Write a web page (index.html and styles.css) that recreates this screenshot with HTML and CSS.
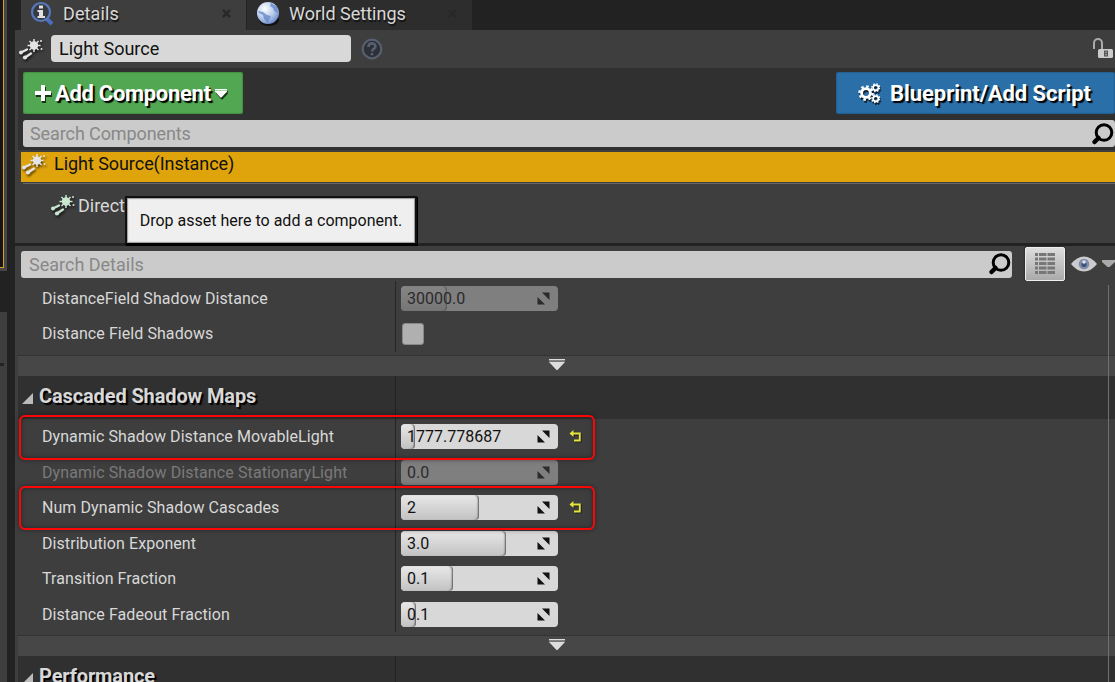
FILE: index.html
```html
<!DOCTYPE html>
<html lang="en">
<head>
    <meta charset="UTF-8">
    <meta name="viewport" content="width=device-width, initial-scale=1.0">
    <title>Details</title>
    <link rel="stylesheet" href="styles.css">
</head>
<body>
    <svg class="sprite" width="0" height="0">
        <symbol id="light" viewBox="0 0 26 24">
            <path d="M16 2v13M9.500 8.500h13M11.500 4l9 9M20.500 4l-9 9" stroke="currentColor" stroke-width="1.500"/>
            <path d="M3 15.500l6-3M7 20.500l6-4" stroke="currentColor" stroke-width="2.200" stroke-linecap="round"/>
            <g fill="currentColor">
                <circle cx="16" cy="8.500" r="4.200"/>
                <circle cx="23" cy="4" r="1"/>
                <circle cx="23.500" cy="12" r="1"/>
                <circle cx="3" cy="15.500" r="2"/>
                <circle cx="7" cy="20.500" r="2.100"/>
            </g>
        </symbol>
        <symbol id="search" viewBox="0 0 24 24">
            <circle cx="13" cy="10.500" r="7.800" fill="none" stroke="#000" stroke-width="3"/>
            <path d="M7.500 16L3.500 20" stroke="#000" stroke-width="4.500" stroke-linecap="round"/>
        </symbol>
        <symbol id="cross" viewBox="0 0 10 10">
            <path d="M1 1l8 8M9 1L1 9" stroke="currentColor" stroke-width="2.600"/>
        </symbol>
        <symbol id="spin" viewBox="0 0 13 13">
            <path d="M5 .5h7.500v7.500zM.5 5v7.500h7.500z" fill="currentColor"/>
        </symbol>
        <symbol id="more" viewBox="0 0 16 12">
            <path d="M0 0h16v1.500H0zM0 3h16L8.500 11h-1z" fill="#ddd"/>
            <path d="M0 1.500h16V3H0z" fill="#777"/>
        </symbol>
        <symbol id="reset" viewBox="0 0 13 13">
            <path d="M4.500 0L.5 3.500l4 3.500z" fill="#e4e43c"/>
            <path d="M3 3.500h7.800v7H5" fill="none" stroke="#e4e43c" stroke-width="1.800"/>
        </symbol>
        <symbol id="gear" viewBox="-10 -10 20 20">
            <circle r="5.500" fill="none" stroke="#fff" stroke-width="3.600"/>
            <circle r="8.200" fill="none" stroke="#fff" stroke-width="3" stroke-dasharray="3.220 3.220"/>
        </symbol>
    </svg>

    <div class="window">
        <div class="side">
            <div class="side-top"></div>
            <div class="side-bottom"><i></i></div>
        </div>

        <div class="panel">
            <div class="tabs">
                <div class="tab active">
                    <svg class="tab-icon" width="26" height="26" viewBox="0 0 26 26">
                        <path d="M17 17l6 6" stroke="#4a6fc0" stroke-width="4"/>
                        <circle cx="12" cy="11" r="9" fill="#363b42" stroke="#5678bd" stroke-width="2.200"/>
                        <path d="M10 4.500h4v3h-4zM8.500 9H14v6h2v2H8.500v-2H10v-4H8.500z" fill="#e0e0e0"/>
                    </svg>
                    <span>Details</span>
                    <svg class="close" width="9" height="9"><use href="#cross"/></svg>
                </div>
                <div class="tab">
                    <svg class="tab-icon" width="26" height="26" viewBox="0 0 26 26">
                        <defs>
                            <radialGradient id="globe" cx=".35" cy=".3" r=".75">
                                <stop offset="0" stop-color="#fff"/>
                                <stop offset=".6" stop-color="#b5c8ea"/>
                                <stop offset="1" stop-color="#6b8bc8"/>
                            </radialGradient>
                        </defs>
                        <ellipse cx="14" cy="19" rx="10" ry="6" fill="#111"/>
                        <circle cx="13" cy="12" r="11" fill="url(#globe)"/>
                        <path d="M3 10l5 1 4 3 4 1-2 4-1 3-4-4-1-4-4-2zM16 2l6 4 1 6-4-2-1-3-3-2z" fill="#6789ca" opacity=".8"/>
                    </svg>
                    <span>World Settings</span>
                    <svg class="close" width="9" height="9"><use href="#cross"/></svg>
                </div>
            </div>

            <div class="name-row">
                <svg class="light" width="26" height="24"><use href="#light"/></svg>
                <div class="name">Light Source</div>
                <svg class="help" width="22" height="24" viewBox="0 0 22 24">
                    <circle cx="11" cy="12" r="9.300" fill="#2d3036" stroke="#566070" stroke-width="2.200"/>
                    <path d="M7.500 10c0-5 7-4.500 7-.5 0 2.300-3.500 2.300-3.500 5M11 16v2.300" fill="none" stroke="#566070" stroke-width="2.600"/>
                </svg>
                <svg class="lock" width="21" height="22" viewBox="0 0 21 22">
                    <path d="M2 11V5a4 4 0 0 1 8 0v7" fill="none" stroke="#aaa" stroke-width="2"/>
                    <rect x="6" y="11" width="15" height="9" rx="1.500" fill="#ccc"/>
                    <path d="M12 12.500h4v6h-4z" fill="#555"/>
                    <path d="M13.500 13.500h1v1.500h-1zM13.500 16h1v1.500h-1z" fill="#ccc"/>
                </svg>
            </div>

            <div class="components">
                <div class="buttons">
                    <div class="button add">
                        <svg width="16" height="16" viewBox="0 0 16 16"><path d="M6 0h4v6h6v4h-6v6H6v-6H0V6h6z" fill="#fff"/></svg>
                        <span>Add Component</span>
                        <svg width="12" height="9" viewBox="0 0 12 9"><path d="M0 0h12v1H0zM0 1.500h12v1L6.500 8.500h-1L0 2.500z" fill="#fff"/></svg>
                    </div>
                    <div class="button blueprint">
                        <svg width="24" height="22" viewBox="0 0 24 22">
                            <use href="#gear" x="0" y="3" width="16" height="16"/>
                            <use href="#gear" x="13" y="1" width="9.500" height="9.500"/>
                            <use href="#gear" x="13" y="12" width="9.500" height="9.500"/>
                        </svg>
                        <span>Blueprint/Add Script</span>
                    </div>
                </div>
                <div class="search">
                    <span>Search Components</span>
                    <svg width="24" height="24"><use href="#search"/></svg>
                </div>
            </div>

            <div class="tree">
                <div class="tree-root">
                    <svg class="light" width="26" height="24"><use href="#light"/></svg>
                    <span>Light Source(Instance)</span>
                </div>
                <div class="tree-child">
                    <svg class="light green" width="26" height="24"><use href="#light"/></svg>
                    <span>Direct</span>
                    <div class="tooltip">Drop asset here to add a component.</div>
                </div>
            </div>

            <div class="filter">
                <div class="search">
                    <span>Search Details</span>
                    <svg width="24" height="24"><use href="#search"/></svg>
                </div>
                <div class="matrix">
                    <svg width="20" height="22" viewBox="0 0 20 22">
                        <path d="M0 1.500h3M4 1.500h7.500M12.500 1.500H20M0 6h3M4 6h7.500M12.500 6H20M0 10.500h3M4 10.500h7.500M12.500 10.500H20M0 15h3M4 15h7.500M12.500 15H20M0 19.500h3M4 19.500h7.500M12.500 19.500H20" stroke="#777" stroke-width="2.800"/>
                    </svg>
                </div>
                <svg class="eye" width="26" height="16" viewBox="0 0 26 16">
                    <path d="M0 8Q6 .5 13 .5T26 8Q20 15.500 13 15.500T0 8z" fill="#ccc"/>
                    <circle cx="13" cy="8" r="5.300" fill="#7d8dab"/>
                    <circle cx="13" cy="8.500" r="2.600" fill="#3f5377"/>
                    <circle cx="13" cy="6" r="1.800" fill="#dfe6f0"/>
                </svg>
                <svg class="arrow" width="13" height="8" viewBox="0 0 13 8"><path d="M0 0h13v2L7.500 7h-2L0 2z" fill="#aaa"/></svg>
            </div>

            <div class="details">
                <div class="rows">
                    <div class="row">
                        <label>DistanceField Shadow Distance</label>
                        <div class="value"><div class="field disabled"><i style="width: 46px"></i><span>30000.0</span><svg width="13" height="13"><use href="#spin"/></svg></div></div>
                    </div>
                    <div class="row">
                        <label>Distance Field Shadows</label>
                        <div class="value"><div class="checkbox"></div></div>
                    </div>
                </div>
                <div class="expander"><svg width="16" height="12"><use href="#more"/></svg></div>

                <div class="category">
                    <h2><svg width="11" height="11" viewBox="0 0 11 11"><path d="M11 0v11H0z" fill="#bbb"/></svg>Cascaded Shadow Maps</h2>
                </div>
                <div class="rows">
                    <div class="row">
                        <label>Dynamic Shadow Distance MovableLight</label>
                        <div class="value"><div class="field"><i style="width: 14px"></i><span>1777.778687</span><svg width="13" height="13"><use href="#spin"/></svg></div><svg class="reset" width="13" height="13"><use href="#reset"/></svg></div>
                        <div class="mark"></div>
                    </div>
                    <div class="row muted">
                        <label>Dynamic Shadow Distance StationaryLight</label>
                        <div class="value"><div class="field disabled"><span>0.0</span><svg width="13" height="13"><use href="#spin"/></svg></div></div>
                    </div>
                    <div class="row">
                        <label>Num Dynamic Shadow Cascades</label>
                        <div class="value"><div class="field"><i style="width: 78px"></i><span>2</span><svg width="13" height="13"><use href="#spin"/></svg></div><svg class="reset" width="13" height="13"><use href="#reset"/></svg></div>
                        <div class="mark low"></div>
                    </div>
                    <div class="row">
                        <label>Distribution Exponent</label>
                        <div class="value"><div class="field"><i style="width: 105px"></i><span>3.0</span><svg width="13" height="13"><use href="#spin"/></svg></div></div>
                    </div>
                    <div class="row">
                        <label>Transition Fraction</label>
                        <div class="value"><div class="field"><i style="width: 52px"></i><span>0.1</span><svg width="13" height="13"><use href="#spin"/></svg></div></div>
                    </div>
                    <div class="row">
                        <label>Distance Fadeout Fraction</label>
                        <div class="value"><div class="field"><i style="width: 15px"></i><span>0.1</span><svg width="13" height="13"><use href="#spin"/></svg></div></div>
                    </div>
                </div>
                <div class="expander"><svg width="16" height="12"><use href="#more"/></svg></div>

                <div class="category">
                    <h2><svg width="11" height="11" viewBox="0 0 11 11"><path d="M11 0v11H0z" fill="#bbb"/></svg>Performance</h2>
                </div>
                <div class="scrollbar"></div>
            </div>
        </div>
    </div>
</body>
</html>
```

FILE: styles.css
```css
* {
    box-sizing: border-box;
}

body {
    margin: 0;
    height: 682px;
    overflow: hidden;
    background: #222;
    color: #d8d8d8;
    font-family: Roboto, "Liberation Sans", sans-serif;
    font-size: 16px;
}

svg {
    display: block;
    flex: none;
}

.sprite {
    display: none;
}

.window {
    display: flex;
    height: 682px;
}

/* edge of the viewport on the left */
.side {
    display: flex;
    flex-direction: column;
    justify-content: space-between;
    width: 15px;
    flex: none;
}

.side-top {
    width: 7px;
    height: 271px;
    background: #131519;
    border-right: 3px solid #474747;
    border-bottom: 3px solid #474747;
    box-shadow: inset -1px -1px #d9a020;
}

.side-bottom {
    width: 7px;
    height: 370px;
    padding-top: 51px;
    background: #3e3e3e;
}

.side-bottom i {
    display: block;
    width: 4px;
    height: 3px;
    background: #222;
}

.panel {
    flex: 1;
    min-width: 0;
    display: flex;
    flex-direction: column;
}

.tabs {
    display: flex;
    gap: 1px;
    height: 30px;
    padding-left: 6px;
    flex: none;
}

.tab {
    display: flex;
    align-items: center;
    width: 225px;
    padding: 0 15px 3px 8px;
    background: #2d2d2d;
    font-size: 18px;
    text-shadow: 1px 2px 1px #111;
}

.tab.active {
    letter-spacing: 0.1px;
}

.tab.active {
    background: #3e3e3e;
}

.tab span {
    flex: 1;
    margin-left: 8px;
}

.close {
    color: #282828;
}

.name-row {
    display: flex;
    align-items: center;
    height: 38px;
    padding: 0 2px 1px 3px;
    background: #3e3e3e;
    flex: none;
}

.light {
    color: #e4e4e4;
    filter: drop-shadow(1px 2px 1px rgba(0, 0, 0, 0.6));
}

.light.green {
    color: #c9e6cf;
}

.name {
    width: 300px;
    height: 27px;
    margin: 0 10px 0 7px;
    padding-left: 8px;
    background: #d8d8d8;
    border-radius: 4px;
    color: #111;
    font-size: 18px;
    line-height: 27px;
}

.lock {
    margin-left: auto;
}

.components {
    height: 82px;
    padding: 4px 0 0 5px;
    margin-left: 3px;
    background: #303030;
    box-shadow: -3px 0 #3e3e3e;
    flex: none;
}

.buttons {
    display: flex;
    justify-content: space-between;
    height: 42px;
    margin-bottom: 6px;
}

.button {
    display: flex;
    align-items: center;
    border-radius: 2px;
    color: #fff;
    font-size: 22px;
    font-weight: bold;
    text-shadow: 2px 2px 1px #000;
}

.button svg {
    filter: drop-shadow(1px 2px 0 rgba(0, 0, 0, 0.7));
}

.add {
    width: 220px;
    padding-left: 12px;
    gap: 4px;
    background: #52a852;
    box-shadow: inset 0 0 2px #245c24;
    letter-spacing: -0.3px;
}

.blueprint {
    width: 279px;
    padding-left: 22px;
    gap: 8px;
    background: #2b6fa9;
    box-shadow: inset 0 0 2px #12395c;
    letter-spacing: -0.05px;
}

.search {
    display: flex;
    align-items: center;
    justify-content: space-between;
    height: 27px;
    padding-left: 7px;
    background: #cbcbcb;
    border-radius: 3px;
    color: #888;
    font-size: 18px;
    letter-spacing: -0.1px;
}

.tree {
    height: 96px;
    padding: 2px 0 0 6px;
    background: #3e3e3e;
    border-bottom: 3px solid #222;
    flex: none;
}

.tree-root {
    display: flex;
    height: 30px;
    gap: 7px;
    background: #dfa30b;
    color: #111;
    font-size: 18px;
    line-height: 24px;
    letter-spacing: -0.05px;
}

.tree-child {
    position: relative;
    display: flex;
    align-items: center;
    height: 43px;
    margin: 1px 0 0 2px;
    padding-left: 27px;
    gap: 2px;
    border-top: 1px solid #666;
    font-size: 18px;
}

.tooltip {
    position: absolute;
    left: 102px;
    top: 12px;
    width: 292px;
    height: 49px;
    border: 2px solid #111;
    border-bottom-color: #000;
    background: #efefef;
    box-shadow: inset 0 0 1px 1px #999, 1px 1px #000;
    color: #111;
    font-size: 16px;
    line-height: 45px;
    text-align: center;
    z-index: 2;
}

.filter {
    display: flex;
    align-items: center;
    height: 35px;
    padding-left: 6px;
    background: #3e3e3e;
    flex: none;
}

.filter .search {
    width: 991px;
    margin: 1px 13px 0 0;
    padding-left: 8px;
    letter-spacing: 0;
}

.matrix {
    display: flex;
    align-items: center;
    justify-content: center;
    width: 40px;
    height: 34px;
    border: 1px solid #eee;
    border-radius: 2px;
    background: linear-gradient(#ddd, #aaa);
    box-shadow: 0 0 2px #111;
}

.eye {
    margin: 0 5px 0 6px;
}

.details {
    position: relative;
    flex: 1;
    padding-left: 3px;
    background: #3e3e3e;
}

.rows {
    height: 216px;
    background: linear-gradient(#262626, #262626) 377px 0 / 1px 213px no-repeat;
}

.rows:first-child {
    height: 74px;
    background-size: 1px 71px;
}

.row {
    position: relative;
    display: flex;
    align-items: center;
    height: 35.5px;
}

.rows:first-child .row {
    height: 35.2px;
}

.row label {
    width: 383px;
    padding-left: 24px;
    letter-spacing: 0.07px;
}

.row.muted label {
    color: #7a7a7a;
    letter-spacing: 0.11px;
}

.value {
    display: flex;
    align-items: center;
}

.field {
    position: relative;
    display: flex;
    align-items: center;
    justify-content: space-between;
    width: 157px;
    height: 25px;
    padding: 0 8px 0 6px;
    border-radius: 4px;
    background: #d8d8d8;
    color: #111;
    overflow: hidden;
}

.field span,
.field svg {
    position: relative;
}

/* filled part of the slider */
.field i {
    position: absolute;
    left: 0;
    top: 0;
    bottom: 0;
    border-radius: 4px;
    background: linear-gradient(#e8e8e8, #c2c2c2);
    box-shadow: inset -2px 0 2px -1px #555;
}

.field.disabled {
    background: #7f7f7f;
    color: #2b2b2b;
}

.field.disabled i {
    background: linear-gradient(#858585, #767676);
}

.checkbox {
    width: 22px;
    height: 22px;
    margin-left: 1px;
    border: 1px solid #888;
    border-radius: 3px;
    background: #b0b0b0;
}

.reset {
    margin-left: 11px;
    filter: drop-shadow(1px 1px 0 rgba(0, 0, 0, 0.5));
}

/* red outline around an edited row */
.mark {
    position: absolute;
    left: 1px;
    top: -4.500px;
    width: 576px;
    height: 45px;
    border: 2px solid #fb0505;
    border-radius: 6px;
    box-shadow: 0 0 5px rgba(0, 0, 0, 0.4), inset 0 0 5px rgba(0, 0, 0, 0.4);
    z-index: 1;
}

.mark.low {
    height: 44px;
}

.expander {
    display: flex;
    align-items: center;
    height: 21px;
    padding: 0 0 2px 531px;
    border-top: 1px solid #333;
    background: #474747;
}

.category {
    height: 43px;
    background: linear-gradient(#222, #222) 377px 0 / 1px 100% no-repeat, #303030;
}

.category h2 {
    display: flex;
    align-items: center;
    gap: 6px;
    margin: 0;
    padding-left: 4px;
    font-size: 20px;
    line-height: 40px;
    letter-spacing: -0.12px;
    text-shadow: 2px 2px 1px #000;
}

.category svg {
    margin-top: 5px;
}

.scrollbar {
    position: absolute;
    left: 1093px;
    top: 4px;
    bottom: 0;
    width: 1px;
    background: #707070;
}
```
